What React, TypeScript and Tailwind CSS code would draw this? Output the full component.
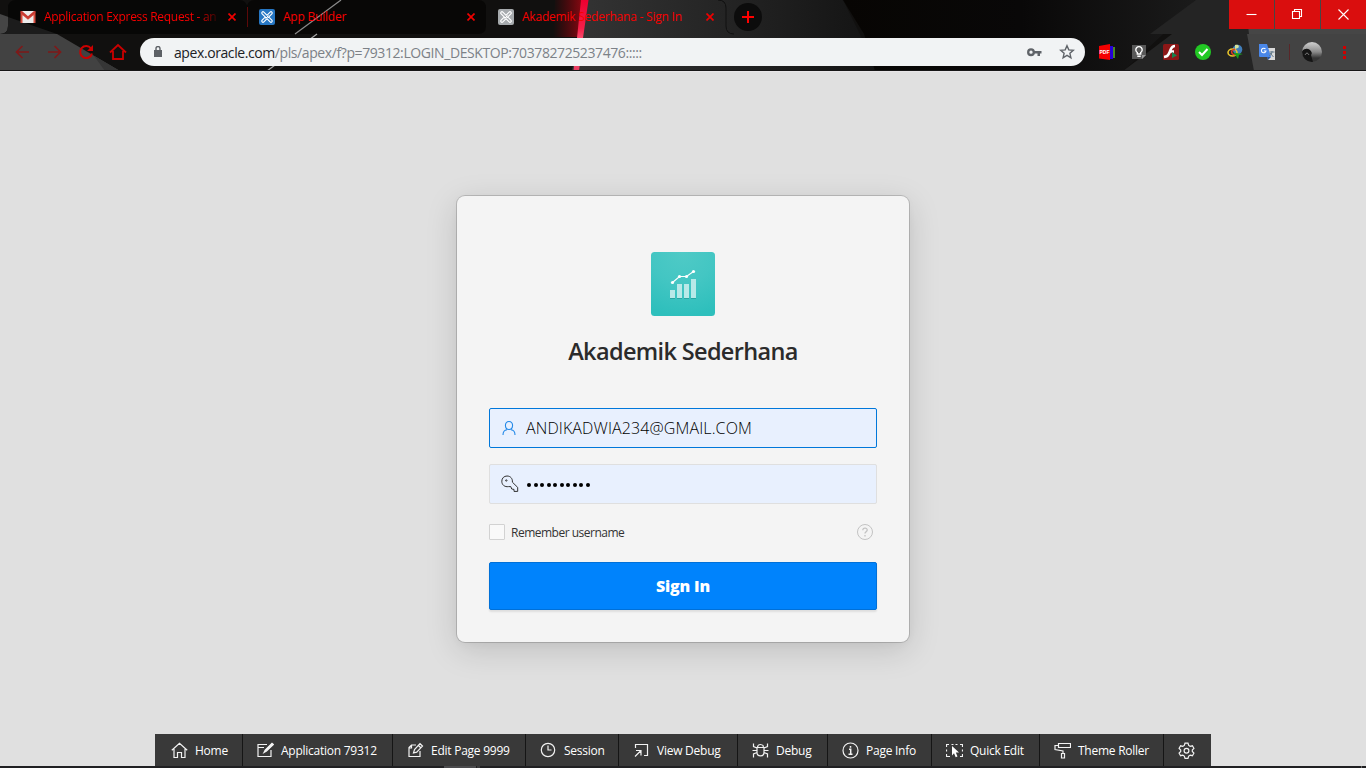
import React from "react";

const Backdrop = () => (
  <svg className="absolute inset-0" width="1366" height="71" viewBox="0 0 1366 71" aria-hidden="true">
    <defs>
      <linearGradient id="steel" x1="0" x2="1" y1="0" y2="0">
        <stop offset="0" stopColor="#343434" />
        <stop offset="0.5" stopColor="#242424" />
        <stop offset="1" stopColor="#131313" />
      </linearGradient>
      <linearGradient id="glow" x1="0" x2="1" y1="0" y2="0">
        <stop offset="0" stopColor="#7a0008" stopOpacity="0" />
        <stop offset="1" stopColor="#8d0812" stopOpacity="0.95" />
      </linearGradient>
      <linearGradient id="beam" x1="0" x2="0" y1="0" y2="1">
        <stop offset="0" stopColor="#ee0030" />
        <stop offset="0.4" stopColor="#f41f48" />
        <stop offset="0.6" stopColor="#ff5f7e" />
        <stop offset="1" stopColor="#e83b60" />
      </linearGradient>
      <linearGradient id="dusk" x1="0" x2="1" y1="0" y2="0">
        <stop offset="0" stopColor="#070503" />
        <stop offset="0.5" stopColor="#090808" />
        <stop offset="1" stopColor="#1b1b1b" />
      </linearGradient>
    </defs>
    <rect width="1366" height="71" fill="#11100f" />
    <path d="M0 14 57 34 0 34Z" fill="#454545" />
    <path d="M0 34Q8 34 8 26V8Q8 0 16 0H239Q247 0 247 8V26Q247 34 255 34Z" fill="#070706" />
    <path d="M8 17 57 34H0Q8 34 8 26Z" fill="#1c1c1c" />
    <path d="M247 34V8Q247 0 255 0H478Q486 0 486 8V26Q486 34 478 34Z" fill="#080706" />
    <path d="M0 34H57L120 71H0Z" fill="#424242" />
    <path d="M94 55.700 120 71H105Z" fill="#363636" />
    <path d="M341 0 295 34" stroke="#8b8b8b" strokeWidth="1.2" />
    <path d="M317 34 267 71" stroke="#a8a8a8" strokeWidth="1.2" />
    <path d="M586 0H843L878 71H572Z" fill="url(#steel)" />
    <path d="M555 0H582L578 37H553Z" fill="url(#glow)" />
    <path d="M581 0H588.500L583 38 579 71H573.500L577 38Z" fill="url(#beam)" />
    <path d="M843 0H1200L1123 71H875L864 34Z" fill="url(#dusk)" />
    <path d="M1196 0H1366V71H1123L1172 34H1150Z" fill="#242424" />
    <path d="M1245 0H1366V34H1249Z" fill="#464646" />
    <path d="M1247 34H1366V71H1254Z" fill="#434343" />
    <path d="M718 0Q726 0 726 8V26Q726 34 734 34" fill="none" stroke="#101010" />
    <rect y="70" width="1366" height="1" fill="#171717" />
  </svg>
);

const Apex = ({ color }: { color: string }) => (
  <svg width="16" height="16" viewBox="0 0 16 16">
    <rect width="16" height="16" rx="2" fill={color} />
    <g stroke="#fff" strokeLinecap="round" strokeWidth="3.600"><path d="m4 4 8 8M12 4l-8 8" /></g>
    <g stroke={color} strokeLinecap="round" strokeWidth="1.300"><path d="m4 4 8 8M12 4l-8 8" /></g>
    <path d="M6.500 9.500 9.500 6.500" stroke="#fff" strokeWidth="1" />
  </svg>
);

const CloseX = () => (
  <svg width="8" height="8" viewBox="0 0 8 8" className="shrink-0">
    <path d="m.5.500 7 7m0-7-7 7" stroke="#f00000" strokeWidth="1.700" />
  </svg>
);

const Tabs = () => (
  <div className="flex h-[34px] w-[1229px] items-center text-[12px] tracking-[-0.22px] text-[#f80000]">
    <div className="ml-2 flex h-full w-[239px] items-center pl-3">
      <svg width="16" height="12" viewBox="0 0 16 12" className="mr-2 shrink-0">
        <path d="M1 0h14v12H1z" fill="#ececec" />
        <path d="M1.500 12V2L8 7.500 14.500 2v10" fill="none" stroke="#d54b3d" strokeWidth="2" />
        <path d="M1 .5 8 6.500l7-6" fill="none" stroke="#c83a32" strokeWidth="2" />
      </svg>
      <span className="w-[176px] whitespace-nowrap tracking-[-0.3px] [mask-image:linear-gradient(to_right,black_155px,transparent_177px)]">Application Express Request - an</span>
      <span className="ml-2"><CloseX /></span>
    </div>
    <div className="flex h-5 w-[239px] items-center border-l border-[#5c0909] pl-[11px]">
      <Apex color="#2676c3" />
      <span className="ml-2 w-[184px] whitespace-nowrap">App Builder</span>
      <CloseX />
    </div>
    <div className="flex h-full w-[240px] items-center pl-3">
      <Apex color="#a6aaad" />
      <span className="ml-2 w-[184px] whitespace-nowrap">Akademik Sederhana - Sign In</span>
      <CloseX />
    </div>
    <div className="ml-2 flex size-7 items-center justify-center rounded-full bg-[#0c0c0c]">
      <svg width="12" height="12" viewBox="0 0 12 12"><path d="M6 0v12M0 6h12" stroke="#f00" strokeWidth="2" /></svg>
    </div>
  </div>
);

const WindowButtons = () => (
  <div className="flex h-[29px] gap-px">
    {["M1.500 6.500h10", "M3.500 3.500v-2h7v7h-2M1.500 3.500h7v7h-7z", "m1.500 1.500 10 10m0-10-10 10"].map((d) => (
      <div key={d} className="flex h-full w-[45px] items-center justify-center bg-[#da0e0e]">
        <svg width="13" height="13" viewBox="0 0 13 13"><path d={d} fill="none" stroke="#fff" strokeWidth="1.100" /></svg>
      </div>
    ))}
  </div>
);

const Extensions = () => (
  <div className="flex h-9 items-center">
    <svg className="ml-[14px]" width="16" height="16" viewBox="0 0 16 16">
      <path d="m0 2 11-2v16L0 14.500z" fill="#f40000" /><path d="M11 2h3v13h-3z" fill="#2500d9" /><path d="M14 3h2v11h-2z" fill="#478922" />
      <text x=".5" y="10" fill="#fff" fontSize="5" fontWeight="700" fontFamily="Liberation Sans">PDF</text>
    </svg>
    <svg className="ml-[16px]" width="16" height="16" viewBox="0 0 16 16">
      <path d="M1 1h14v10l-4 4H1z" fill="#595959" /><path d="M11 15v-4h4z" fill="#999" />
      <path d="M6.300 10V8.500a3.200 3.200 0 1 1 3.400 0V10zM6.300 12.300h3.400" fill="none" stroke="#fff" strokeWidth="1.400" />
    </svg>
    <svg className="ml-[16px]" width="16" height="16" viewBox="0 0 16 16">
      <rect width="16" height="16" rx="1.500" fill="#8d1717" /><path d="M12 2C8 2 8 5 6.500 8.500S4 12.500 1 13M6 7.500h5" fill="none" stroke="#fff" strokeWidth="2.700" /><path d="m9 8 5 3.500L9 14z" fill="#17824d" />
    </svg>
    <svg className="ml-[16px]" width="16" height="16" viewBox="0 0 16 16">
      <circle cx="8" cy="8" r="8" fill="#22c824" /><path d="m4 8 3 3 5.500-6" fill="none" stroke="#fff" strokeWidth="2" />
    </svg>
    <svg className="ml-[16px]" width="16" height="16" viewBox="0 0 16 16">
      <circle cx="10.500" cy="5.500" r="4.800" fill="#417eba" /><path d="M8 1c3-1 5 1 3 3L8 5z" fill="#d5e29c" />
      <ellipse cx="5.500" cy="8.500" rx="4.500" ry="3.500" fill="none" stroke="#e8c52b" strokeWidth="1.600" /><path d="M8 5.500C4 5 3 10 8 11" fill="none" stroke="#dc3a28" strokeWidth="1.500" />
      <path d="m6 8.500 10 1.500-4 1-1 4-2-3z" fill="#18a018" />
    </svg>
    <svg className="ml-[16px]" width="16" height="16" viewBox="0 0 16 16">
      <path d="M7 4h9v12H9z" fill="#dadada" /><path d="M0 0h8l4 13H1q-1 0-1-1z" fill="#4a87e8" /><path d="m8 13 4 0-3 3z" fill="#2856a5" />
      <path d="M6.500 5A2.300 2.300 0 1 0 7 7H4.800" fill="none" stroke="#fff" strokeWidth="1.100" />
      <path d="M10.500 8h5m-2.500-1v1q0 3-3 4m1-3 3.500 4" fill="none" stroke="#62798a" />
    </svg>
    <span className="ml-[14px] h-4 w-px bg-[#5a2628]" />
    <svg className="ml-[12px]" width="20" height="20" viewBox="0 0 20 20">
      <defs><clipPath id="av"><circle cx="10" cy="10" r="10" /></clipPath><linearGradient id="sky" x1="0" x2="0" y1="0" y2="1"><stop stopColor="#d0d0d0" /><stop offset=".5" stopColor="#8a8a8a" /><stop offset=".8" stopColor="#353535" /></linearGradient></defs>
      <g clipPath="url(#av)"><path fill="url(#sky)" d="M0 0h20v20H0z" /><path d="M0 9q4-4 8-1 3 3 1 5l2 7H0z" fill="#151515" /><path d="M3 13q2-4 4 0" fill="none" stroke="#777" /></g>
    </svg>
    <svg className="ml-[21px]" width="3" height="13" viewBox="0 0 3 13"><path d="M0 0h3v3H0zm0 5h3v3H0zm0 5h3v3H0z" fill="#cf0000" /></svg>
  </div>
);

const Chrome = () => (
  <header className="relative h-[71px] overflow-hidden">
    <Backdrop />
    <div className="relative">
      <div className="flex h-[34px]"><Tabs /><WindowButtons /></div>
      <div className="flex h-9 items-center">
        <svg width="140" height="36" viewBox="0 0 140 36" fill="none" stroke="#cb0000" strokeWidth="2">
          <path d="M29 18H16.500m6-6-6 6 6 6M48 18h12.500m-6-6 6 6-6 6" stroke="#7e1919" strokeWidth="1.700" />
          <path d="M91 14.500a6 6 0 1 0 1 5" /><path d="M93 11v6h-6z" fill="#cb0000" stroke="none" />
          <path d="M110 18.500 118 11l8 7.500M113 17v8h10v-8" strokeWidth="1.800" />
        </svg>
        <div className="flex h-7 w-[945px] items-center rounded-full bg-[#f1f3f4] pl-[14px] pr-[10px]">
          <svg width="8" height="12" viewBox="0 0 8 12"><path d="M0 4h8v7H0z" fill="#5c6065" /><path d="M2 4V2.500a2 2 0 0 1 4 0V4" fill="none" stroke="#5c6065" strokeWidth="1.400" /></svg>
          <span className="ml-3 flex-1 whitespace-nowrap pt-px text-[14px] tracking-[-0.41px] text-[#7c8187]"><span className="text-[#202124]">apex.oracle.com</span>/pls/apex/f?p=79312:LOGIN_DESKTOP:703782725237476:::::</span>
          <svg width="15" height="9" viewBox="0 0 15 9"><circle cx="4" cy="4.200" r="2.800" fill="none" stroke="#5f6368" strokeWidth="2.300" /><path d="M7 3h7.500v2.500H13V8h-2.500V5.500H7z" fill="#5f6368" /></svg>
          <svg className="ml-[17px]" width="16" height="16" viewBox="0 0 16 16"><path d="m8 1.700 1.800 4.200 4.500.4-3.400 3 1 4.500L8 11.400l-3.900 2.400 1-4.500-3.400-3 4.500-.4z" fill="none" stroke="#5f6368" strokeWidth="1.400" /></svg>
        </div>
        <Extensions />
      </div>
    </div>
  </header>
);

const AppMark = () => (
  <svg width="64" height="64" viewBox="0 0 64 64">
    <defs><radialGradient id="teal" cx=".5" cy="0" r="1"><stop stopColor="#4fcac6" /><stop offset=".5" stopColor="#43c6c3" /><stop offset="1" stopColor="#2ebfbc" /></radialGradient></defs>
    <rect width="64" height="64" rx="3.500" fill="url(#teal)" />
    <path d="M19 46.500h5m2 0h5m2 0h5m2 0h5" stroke="#29a5a2" />
    <path d="M19 38h5v8h-5zM26 32h5v14h-5zM33 32h5v14h-5zM40 27h5v19h-5z" fill="#b8e9e8" />
    <path d="m21.500 30.500 7-6h7l7-5" fill="none" stroke="#fff" strokeWidth="1.100" />
    <g fill="#fff"><circle cx="21.500" cy="30.500" r="1.600" /><circle cx="28.500" cy="24.500" r="1.600" /><circle cx="35.500" cy="24.500" r="1.600" /><circle cx="42.500" cy="19.500" r="1.600" /></g>
  </svg>
);

const Login = () => (
  <main className="flex h-[663px] justify-center border-t border-[#e8e6e8] bg-[#e0e0e0] pt-[124px]">
    <section className="flex h-[446px] w-[452px] flex-col items-center rounded-lg bg-[#f4f4f4] px-8 pt-14 shadow-[0_0_0_1px_rgba(0,0,0,0.16),0_8px_32px_rgba(0,0,0,0.15),0_2px_8px_rgba(0,0,0,0.03)]">
      <AppMark />
      <h1 className="mt-[19px] h-8 whitespace-nowrap text-[23.5px] font-semibold leading-8 tracking-[-0.65px] text-[#2b2b2b]">Akademik Sederhana</h1>
      <div className="mt-[41px] flex h-10 w-[388px] items-center rounded-[2px] border border-[#0077da] bg-[#e8f0fe] pl-3">
        <svg width="14" height="16" viewBox="0 0 14 16" fill="none" stroke="#2389e8" strokeWidth="1.100"><path d="M7 1.500c5 0 4.500 8 0 8s-5-8 0-8ZM1 15c0-3.500 1.800-5 4-5.200m4 0c2.200.2 4 1.700 4 5.200" /></svg>
        <span className="ml-[10px] text-[16px] font-light tracking-[0.12px] text-black">ANDIKADWIA234@GMAIL.COM</span>
      </div>
      <div className="mt-4 flex h-10 w-[388px] items-center rounded-[2px] border border-[#dfdfdf] bg-[#e8f0fe] pl-[11px]">
        <svg width="18" height="18" viewBox="0 0 18 18" fill="none" stroke="#303030"><path d="M11.400 7.200C11.700 3.500 9.500 1 6 1 3 1 .8 3.200.8 6.200c0 3.800 3 6 6.700 5.400h2.300l.9 2.400 2.300.4v2h3.700v-4z" /><circle cx="5.300" cy="5.500" r=".7" /></svg>
        <span className="ml-2 mt-0.5 flex gap-[2.5px]">{Array.from({ length: 10 }, (_, i) => <i key={i} className="size-1 rounded-full bg-black" />)}</span>
      </div>
      <div className="mt-5 flex h-4 w-[388px] items-center">
        <span className="size-4 rounded-[1px] border border-[#d2d2d2] bg-[#f9f9f9]" />
        <span className="ml-1.5 mt-0.5 flex-1 text-[12px] leading-4 tracking-[-0.5px] text-[#333]">Remember username</span>
        <svg className="mr-1" width="16" height="16" viewBox="0 0 16 16" fill="none" stroke="#c3c3c3"><circle cx="8" cy="8" r="7.500" /><path d="M5.800 6.200c0-3 4.600-2.700 4.400 0C10 7.800 8 7.700 8 9.500M8 11v1.500" strokeWidth="1.300" /></svg>
      </div>
      <button className="mt-[22px] h-12 w-[388px] rounded-[2px] border border-[#0070d8] bg-[#0083fc] text-[16px] font-extrabold tracking-[-0.2px] text-white shadow-[0_2px_2px_rgba(0,0,0,0.09)]">Sign In</button>
    </section>
  </main>
);

const tools: { label: string; box: string; icon: React.ReactNode }[] = [
  { label: "Home", box: "w-[88px] pl-4", icon: <path d="m.8 8.300 7.700-7 7.700 7M3 7v8.500h3.500v-5h4v5H14V7" /> },
  { label: "Application 79312", box: "w-[150px] pl-[14px]", icon: <><path d="M10 2.500H1v12h13V8M1 5.500h6" /><path d="m7 10.500 1.200-2.500L15 1.300l1.300 1.200L9.500 9z" fill="white" /></> },
  { label: "Edit Page 9999", box: "w-[133px] pl-[14px]", icon: <path d="M9 3H4.500L2 5.500v9h11V9M4.500 3v3H2M6.500 11l1-3.500L13 1.700l2.500 2.400-5.800 6zM11.500 3.500 14 6" /> },
  { label: "Session", box: "w-[93px] pl-[14px]", icon: <><circle cx="8" cy="8" r="6.700" /><path d="M8 3.500V8h3.500" /></> },
  { label: "View Debug", box: "w-[119px] pl-[14px]", icon: <path d="M2.500 6V2.500h12v11H11M2 14.500l6-6M3 8.500h5v5" /> },
  { label: "Debug", box: "w-[90px] pl-[14px]", icon: <path d="M5 5.500h7v5c0 4.500-7 4.500-7 0zM5.500 5.500c0-4 6-4 6 0M1.500 1.500v3L5 6m10.500-4.500v3L12 6M.5 8.500H5m7 0h4.500M1.500 15.500V12L5 10.500m10.500 5V12L12 10.500" /> },
  { label: "Page Info", box: "w-[104px] pl-[14px]", icon: <><circle cx="8.500" cy="8.500" r="7.500" /><path d="M7 7.200h1.700V12M6.500 12.200h4M8.500 4v1.700" strokeWidth="1.500" /></> },
  { label: "Quick Edit", box: "w-[108px] pl-[14px]", icon: <><path d="M.5 5V2.500H3m2.500 0h2m2 0h2m2.500 0h2.500V5m0 2.500v2m0 2.500v2.500H14m-10 0H.5V12m0-2.500v-2" /><path d="m6 4 7 6.500H9.800l1.700 4-1.800.8L8 11.300 6 13.500z" fill="white" stroke="none" /></> },
  { label: "Theme Roller", box: "w-[124px] pl-[14px]", icon: <path d="M4.500 1.500h12v4h-12zM4.500 3.500H1v4l8 1.500v2.500M7.500 11.500h3v4.500h-3z" /> },
  { label: "", box: "w-[47px] pl-[14px]", icon: <><path d="m7 1.200 3 0 .7 2.200 1.500.9 2.200-.5 1.500 2.500-1.600 1.700v1.500l1.600 1.700-1.500 2.500-2.200-.5-1.500.9-.7 2.200H7l-.7-2.200-1.500-.9-2.200.5-1.500-2.500 1.600-1.700V8L1.100 6.300l1.500-2.500 2.200.5 1.500-.9z" /><circle cx="8.500" cy="8.700" r="2.400" /></> },
];

const DevBar = () => (
  <footer className="h-[34px] bg-[#e0e0e0]">
    <nav className="ml-[155px] flex h-8 w-[1056px] bg-[#393939]">
      {tools.map((t) => (
        <div key={t.label} className={`${t.box} flex h-8 shrink-0 items-center border-r border-[#151515] text-[12px] tracking-[-0.25px] text-white last:border-r-0`}>
          <svg width="17" height="17" viewBox="0 0 17 17" fill="none" stroke="#f2f2f2" strokeWidth="1.200" className="shrink-0">{t.icon}</svg>
          <span className="ml-[7px] whitespace-nowrap pt-0.5">{t.label}</span>
        </div>
      ))}
    </nav>
    <div className="flex h-0.5 bg-[#202022] pl-[444px]">
      <span className="w-8 bg-[#4b4b4d]" /><span className="ml-px w-[3px] bg-[#3a3a3c]" />
      <span className="ml-[881px] w-px bg-[#6a6a6a]" />
    </div>
  </footer>
);

export default function App() {
  return (
    <div className="h-[768px] w-[1366px] overflow-hidden font-['Open_Sans','Noto_Sans',sans-serif]">
      <Chrome />
      <Login />
      <DevBar />
    </div>
  );
}
